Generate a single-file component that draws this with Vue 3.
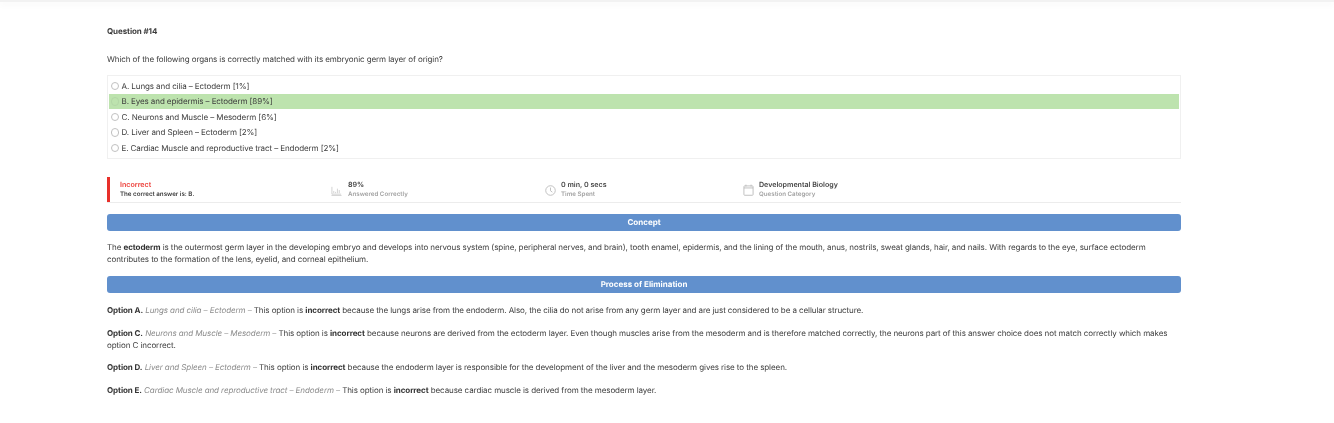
<script setup>
const options = [
  { text: 'A. Lungs and cilia – Ectoderm [1%]' },
  { text: 'B. Eyes and epidermis – Ectoderm [89%]', correct: true },
  { text: 'C. Neurons and Muscle – Mesoderm [6%]' },
  { text: 'D. Liver and Spleen – Ectoderm [2%]' },
  { text: 'E. Cardiac Muscle and reproductive tract – Endoderm [2%]' }
]
</script>

<template>
  <div class="page">
    <div class="topbar"></div>
    <main class="content">
      <h1 class="qnum">Question #14</h1>
      <p class="question">Which of the following organs is correctly matched with its embryonic germ layer of origin?</p>
      <div class="options">
        <div v-for="o in options" :key="o.text" class="option" :class="{ correct: o.correct }">
          <span class="radio"></span>
          <span>{{ o.text }}</span>
        </div>
      </div>

      <div class="stats">
        <div class="stat result">
          <div>
            <div class="s-title red">Incorrect</div>
            <div class="s-sub dark">The correct answer is: B.</div>
          </div>
        </div>
        <div class="stat pct">
          <svg class="icon" viewBox="0 0 12 12" fill="none" stroke="#c4c4c4" stroke-width="0.8">
            <path d="M1 2v8h10M.5 11.4h11" />
            <path d="M3 9V6.5M5 9V7.5M7 9V4M9 9V5.5" />
          </svg>
          <div>
            <div class="s-title">89%</div>
            <div class="s-sub">Answered Correctly</div>
          </div>
        </div>
        <div class="stat time">
          <svg class="icon" viewBox="0 0 12 12" fill="none" stroke="#b5b5b5" stroke-width="0.9">
            <circle cx="6" cy="6" r="5.2" />
            <path d="M6 2.8V6.3L8 7.8" />
          </svg>
          <div>
            <div class="s-title">0 min, 0 secs</div>
            <div class="s-sub">Time Spent</div>
          </div>
        </div>
        <div class="stat cat">
          <svg class="icon tall" viewBox="0 0 12 12.5" fill="none" stroke="#b5b5b5" stroke-width="0.9">
            <rect x="1" y="1.8" width="10" height="10.2" rx="0.8" />
            <path d="M1 4h10M3.2.4v2M8.8.4v2" />
          </svg>
          <div>
            <div class="s-title">Developmental Biology</div>
            <div class="s-sub">Question Category</div>
          </div>
        </div>
      </div>

      <div class="banner first">Concept</div>
      <p class="para concept">The <b>ectoderm</b> is the outermost germ layer in the developing embryo and develops into nervous system (spine, peripheral nerves, and brain), tooth enamel, epidermis, and the lining of the mouth, anus, nostrils, sweat glands, hair, and nails. With regards to the eye, surface ectoderm contributes to the formation of the lens, eyelid, and corneal epithelium.</p>

      <div class="banner">Process of Elimination</div>
      <p class="para opt first-opt"><b>Option A.</b> <i>Lungs and cilia – Ectoderm –</i> This option is <b>incorrect</b> because the lungs arise from the endoderm. Also, the cilia do not arise from any germ layer and are just considered to be a cellular structure.</p>
      <p class="para opt"><b>Option C.</b> <i>Neurons and Muscle – Mesoderm –</i> This option is <b>incorrect</b> because neurons are derived from the ectoderm layer. Even though muscles arise from the mesoderm and is therefore matched correctly, the neurons part of this answer choice does not match correctly which makes option C incorrect.</p>
      <p class="para opt tight"><b>Option D.</b> <i>Liver and Spleen – Ectoderm –</i> This option is <b>incorrect</b> because the endoderm layer is responsible for the development of the liver and the mesoderm gives rise to the spleen.</p>
      <p class="para opt loose"><b>Option E.</b> <i>Cardiac Muscle and reproductive tract – Endoderm –</i> This option is <b>incorrect</b> because cardiac muscle is derived from the mesoderm layer.</p>
    </main>
  </div>
</template>

<style scoped>
.page {
  width: 1334px;
  height: 423px;
  overflow: hidden;
  background: #fff;
  font-family: Inter, "Liberation Sans", sans-serif;
  font-size: 8px;
  letter-spacing: -0.09px;
  line-height: 12.5px;
  color: #3c3c3c;
  text-rendering: geometricPrecision;
}
.topbar {
  height: 2px;
  background: #f2f2f2;
  box-shadow: 0 2px 7px rgba(0, 0, 0, 0.07);
}
.content {
  width: 1074px;
  margin-left: 107px;
  padding-top: 23px;
  filter: blur(0.25px);
}
.qnum {
  margin: 0;
  font-size: 8px;
  line-height: 13px;
  font-weight: 700;
  color: #3c3c3c;
}
.question {
  margin: 15px 0 0;
  line-height: 13px;
}
.options {
  margin-top: 9px;
  height: 84px;
  box-sizing: border-box;
  border: 1px solid #f0f0f0;
  padding: 2px 1px 0;
}
.option {
  height: 15.5px;
  display: flex;
  align-items: center;
  padding-left: 1.5px;
  gap: 2.5px;
}
.option.correct {
  background: #bde3ae;
}
.radio {
  width: 8.5px;
  height: 8.5px;
  border: 0.8px solid #c0c0c0;
  border-radius: 50%;
  box-sizing: border-box;
  background: #fff;
}
.correct .radio {
  border-color: #b3d7a6;
  background: transparent;
}
.stats {
  margin-top: 18px;
  height: 26px;
  box-sizing: border-box;
  border-bottom: 1px solid #ececec;
  display: flex;
}
.stat {
  display: flex;
  align-items: center;
  gap: 5px;
  padding-top: 1px;
}
.result {
  width: 224px;
  box-sizing: border-box;
  border-left: 3px solid #e8302a;
  padding-left: 10px;
}
.pct { width: 214px; gap: 6px; }
.time { width: 198px; }
.icon {
  width: 11px;
  height: 11px;
  flex: none;
}
.icon.tall { height: 12px; }
.s-title {
  font-size: 7.1px;
  letter-spacing: 0;
  line-height: 10px;
  font-weight: 600;
  color: #444;
}
.s-title.red { color: #ec3c36; }
.s-sub {
  font-size: 6.2px;
  letter-spacing: 0;
  line-height: 10px;
  font-weight: 600;
  color: #a3a3a3;
}
.s-sub.dark { color: #3c3c3c; }
.banner {
  height: 17px;
  border-radius: 3px;
  background: #6190cd;
  color: #fff;
  font-size: 8px;
  letter-spacing: 0;
  font-weight: 700;
  line-height: 17px;
  text-align: center;
}
.banner.first { margin-top: 11px; }
.para { margin: 0; letter-spacing: -0.08px; }
.concept { margin: 10px 0 11px; line-height: 12px; }
.opt { margin-top: 10px; }
.first-opt { margin-top: 11px; }
.tight { margin-top: 9px; }
.loose { margin-top: 11px; }
i { color: #8a8a8a; }
b { font-weight: 700; color: #333; }
</style>
